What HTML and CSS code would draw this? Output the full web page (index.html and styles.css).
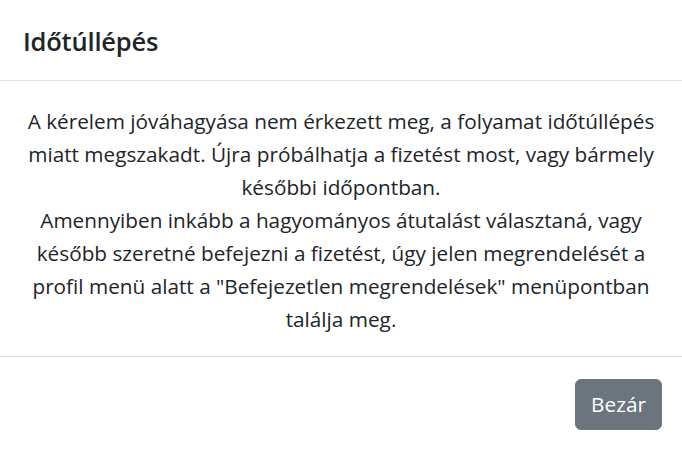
FILE: index.html
```html
<!DOCTYPE html>
<html lang="hu">
<head>
<meta charset="utf-8">
<title>Időtúllépés</title>
<link rel="stylesheet" href="styles.css">
</head>
<body>
<div class="modal">
  <div class="modal-header">
    <h5 class="modal-title">Időtúllépés</h5>
  </div>
  <div class="modal-body">
    <p class="msg">A kérelem jóváhagyása nem érkezett meg, a folyamat időtúllépés<br>miatt megszakadt. Újra próbálhatja a fizetést most, vagy bármely<br>későbbi időpontban.<br>Amennyiben inkább a hagyományos átutalást választaná, vagy<br>később szeretné befejezni a fizetést, úgy jelen megrendelését a<br>profil menü alatt a "Befejezetlen megrendelések" menüpontban<br>találja meg.</p>
  </div>
  <div class="modal-footer">
    <button class="btn btn-secondary" type="button">Bezár</button>
  </div>
</div>
</body>
</html>
```

FILE: styles.css
```css
html, body {
  margin: 0;
  padding: 0;
  background: #ffffff;
}
body {
  font-family: "Open Sans", "Noto Sans", "Liberation Sans", sans-serif;
  color: #212529;
  width: 682px;
  height: 450px;
  overflow: hidden;
}
.modal {
  display: flex;
  flex-direction: column;
  width: 682px;
  height: 450px;
  background: #fff;
}
.modal-header {
  height: 80px;
  border-bottom: 1px solid #dee2e6;
  display: flex;
  align-items: center;
  padding: 0 23px;
  box-sizing: content-box;
}
.modal-title {
  margin: 0;
  font-size: 25.5px;
  font-weight: 600;
  line-height: 33px;
  letter-spacing: -0.2px;
  position: relative;
  top: 1px;
}
.modal-body {
  height: 275px;
  box-sizing: border-box;
  padding: 24px 16px 20px;
  display: flex;
  justify-content: center;
}
.msg {
  margin: 0;
  text-align: center;
  font-size: 20.75px;
  line-height: 33px;
  white-space: nowrap;
}
.modal-footer {
  flex: 1;
  border-top: 1px solid #dee2e6;
  display: flex;
  justify-content: flex-end;
  align-items: flex-start;
  padding: 22px 20px 0 0;
}
.btn {
  font-family: inherit;
  font-size: 20.75px;
  line-height: 33px;
  height: 51px;
  width: 87px;
  padding: 0;
  border: 1px solid #6c757d;
  border-radius: 6px;
  cursor: pointer;
}
.btn-secondary {
  background: #6c757d;
  color: #ffffff;
}
```
